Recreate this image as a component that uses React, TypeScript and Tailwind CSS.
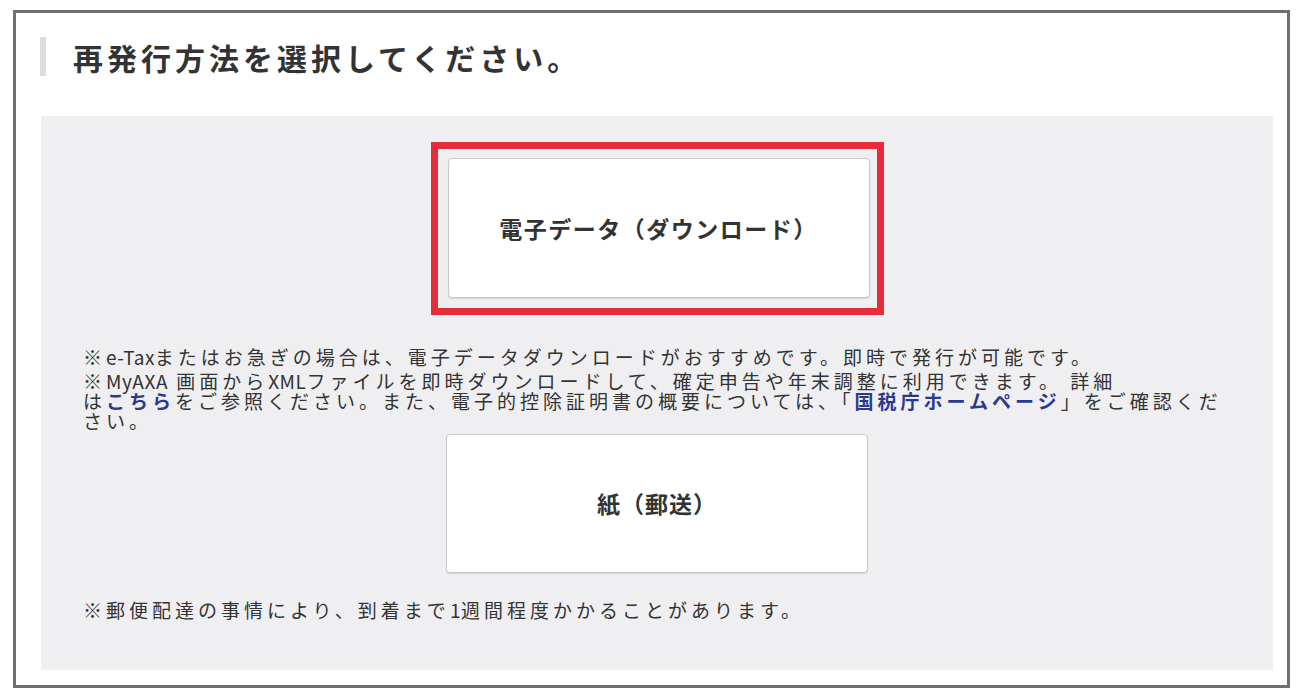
export default function App() {
  return (
    <div className="min-h-screen bg-white pl-[13px] pt-[10px] font-['Noto_Sans_CJK_JP',sans-serif] text-[#333]">
      <div className="w-[1277px] h-[678px] border-[3px] border-[#707070] bg-white pl-[25px] pr-[14px] flex flex-col">
        {/* heading */}
        <div className="flex items-center mt-[24px] h-[39px]">
          <div className="w-[6px] h-[39px] bg-[#dddddd] -ml-[1px]" />
          <h1 className="ml-[27px] text-[30px] font-bold tracking-[4px] leading-none">
            再発行方法を選択してください。
          </h1>
        </div>

        {/* panel */}
        <div className="mt-[40px] flex-1 mb-[15px] bg-[#efeff2] pt-[26px] pl-[42px]">
          <div className="flex justify-center -ml-[42px]">
            <div className="border-[7px] border-[#e62e3a] pt-[9px] pb-[10px] pl-[10px] pr-[7px]">
              <button className="w-[422px] h-[140px] bg-white border border-[#c9c9cc] rounded-[4px] shadow-[0_1px_1px_rgba(0,0,0,0.12)] text-[23px] tracking-[1.5px] font-bold">
                電子データ（ダウンロード）
              </button>
            </div>
          </div>

          <div className="mt-[32px] text-[19px] tracking-[4px] leading-[20px] whitespace-nowrap">
            <p>
              ※<span className="tracking-[0.5px]">e-Tax</span>またはお急ぎの場合は、電子データダウンロードがおすすめです。即時で発行が可能です。
            </p>
            <p className="mt-[4px]">
              ※<span className="tracking-[0.5px]">MyAXA</span> 画面から<span className="tracking-[0.5px]">XML</span>ファイルを即時ダウンロードして、確定申告や年末調整に利用できます。 詳細
              <br />
              は<a className="text-[#2b3990] font-bold">こちら</a>をご参照ください。また、電子的控除証明書の概要については、「<a className="text-[#2b3990] font-bold">国税庁ホームページ</a>」をご確認くだ
              <br />
              さい。
            </p>
          </div>

          <div className="flex justify-center -ml-[42px] mt-[3px]">
            <button className="w-[422px] h-[139px] bg-white border border-[#c9c9cc] rounded-[4px] shadow-[0_1px_1px_rgba(0,0,0,0.12)] text-[23px] tracking-[1px] font-bold">
              紙（郵送）
            </button>
          </div>

          <p className="mt-[27px] text-[19px] tracking-[4px] leading-[20px] whitespace-nowrap">
            ※郵便配達の事情により、到着まで<span className="tracking-[0.5px]">1</span>週間程度かかることがあります。
          </p>
        </div>
      </div>
    </div>
  );
}
